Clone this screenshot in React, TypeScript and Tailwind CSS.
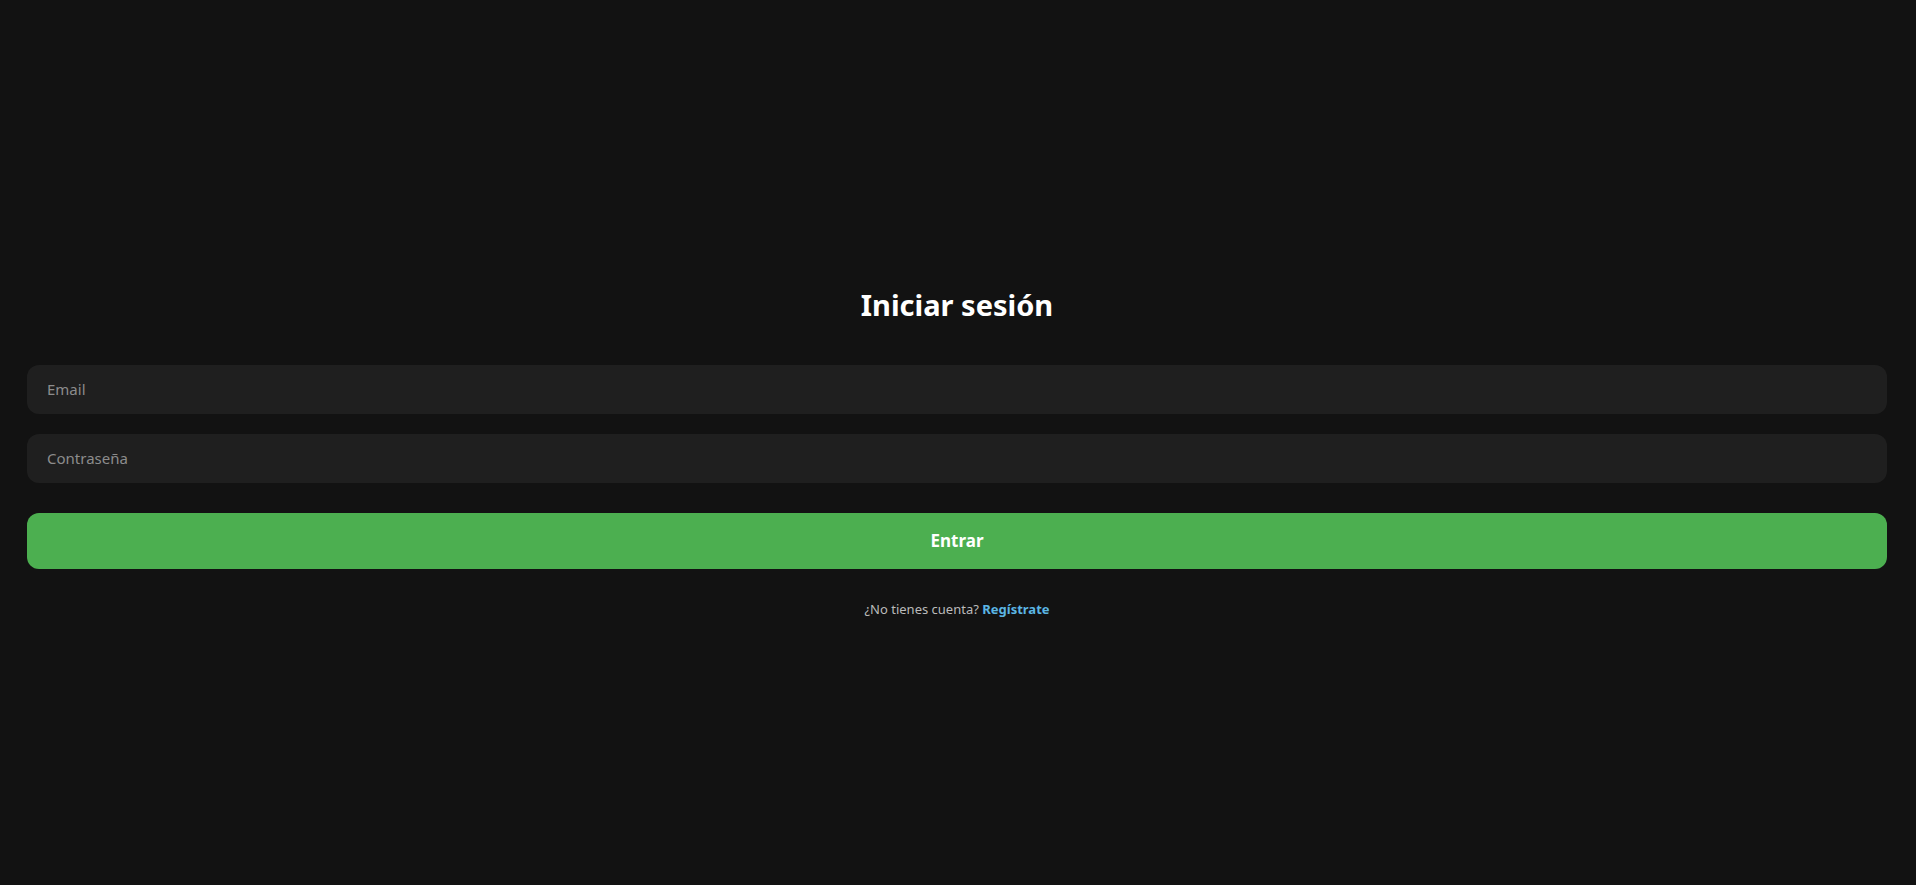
import React from "react";

export default function App() {
  return (
    <div
      className="min-h-screen w-full bg-[#121212] flex flex-col justify-center pl-[27px] pr-[29px]"
      style={{ fontFamily: '"Noto Sans", "Open Sans", sans-serif' }}
    >
      <div className="w-full flex flex-col pt-[18px]">
        <h1 className="text-center text-white font-bold text-[29px] leading-[40px] mb-10">
          Iniciar sesión
        </h1>
        <input
          type="email"
          placeholder="Email"
          className="h-[49px] w-full rounded-xl bg-[#1f1f1f] px-5 text-[15px] text-white placeholder:text-[#8c8c8c] outline-none mb-5"
        />
        <input
          type="password"
          placeholder="Contraseña"
          className="h-[49px] w-full rounded-xl bg-[#1f1f1f] px-5 text-[15px] text-white placeholder:text-[#8c8c8c] outline-none"
        />
        <button className="mt-[30px] h-[56px] w-full rounded-xl bg-[#4caf50] text-white font-bold text-[17px]">
          Entrar
        </button>
        <p className="mt-[30px] text-center text-[13px] leading-5 text-[#bbbbbb]">
          ¿No tienes cuenta?{" "}
          <a href="#" className="font-bold text-[#5bb6e4]">
            Regístrate
          </a>
        </p>
      </div>
    </div>
  );
}
